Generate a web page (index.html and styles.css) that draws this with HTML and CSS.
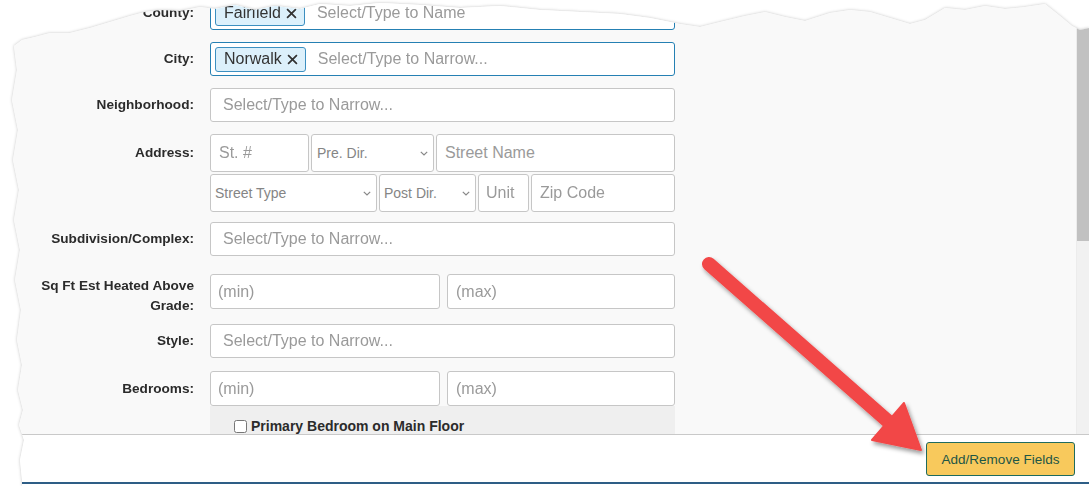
FILE: index.html
```html
<!DOCTYPE html>
<html>
<head>
<meta charset="utf-8">
<link rel="stylesheet" href="styles.css">
</head>
<body>
<div class="sheet">
  <div class="edge">
    <div class="torn">
      <div class="viewport">
        <div class="scroll-area">
          <form class="form">
            <div class="row r-county">
              <label class="label">County:</label>
              <div class="input focus tagbox">
                <span class="tag">Fairfield <svg class="x" viewBox="0 0 10 10"><path d="M1 1L9 9M9 1L1 9"/></svg></span>
                <span class="ph">Select/Type to Name</span>
              </div>
            </div>
            <div class="row r-city">
              <label class="label">City:</label>
              <div class="input focus tagbox">
                <span class="tag">Norwalk <svg class="x" viewBox="0 0 10 10"><path d="M1 1L9 9M9 1L1 9"/></svg></span>
                <span class="ph">Select/Type to Narrow...</span>
              </div>
            </div>
            <div class="row r-nb">
              <label class="label">Neighborhood:</label>
              <input class="input pad12" placeholder="Select/Type to Narrow...">
            </div>
            <div class="row r-addr">
              <label class="label">Address:</label>
              <div class="addr">
                <div class="addr-line one">
                  <input class="input tall pad8" placeholder="St. #">
                  <div class="select tall"><span>Pre. Dir.</span><svg class="chev" viewBox="0 0 8 5"><path d="M0.8 0.8L4 4L7.2 0.8"/></svg></div>
                  <input class="input tall pad8" placeholder="Street Name">
                </div>
                <div class="addr-line two">
                  <div class="select tall"><span>Street Type</span><svg class="chev" viewBox="0 0 8 5"><path d="M0.8 0.8L4 4L7.2 0.8"/></svg></div>
                  <div class="select tall"><span>Post Dir.</span><svg class="chev" viewBox="0 0 8 5"><path d="M0.8 0.8L4 4L7.2 0.8"/></svg></div>
                  <input class="input tall pad7" placeholder="Unit">
                  <input class="input tall pad8" placeholder="Zip Code">
                </div>
              </div>
            </div>
            <div class="row r-sub">
              <label class="label">Subdivision/Complex:</label>
              <input class="input pad12" placeholder="Select/Type to Narrow...">
            </div>
            <div class="row r-sqft">
              <label class="label two-line">Sq Ft Est Heated Above Grade:</label>
              <div class="range">
                <input class="input mid pad7" placeholder="(min)">
                <input class="input mid pad8" placeholder="(max)">
              </div>
            </div>
            <div class="row r-style">
              <label class="label">Style:</label>
              <input class="input pad12" placeholder="Select/Type to Narrow...">
            </div>
            <div class="row r-bed">
              <label class="label">Bedrooms:</label>
              <div class="range">
                <input class="input mid pad7" placeholder="(min)">
                <input class="input mid pad8" placeholder="(max)">
              </div>
            </div>
            <div class="row r-panel">
              <span></span>
              <div class="panel">
                <label class="check"><input type="checkbox" class="cb">Primary Bedroom on Main Floor</label>
              </div>
            </div>
          </form>
        </div>
        <div class="scrollbar"><div class="thumb"></div></div>
      </div>
      <div class="footer">
        <button type="button" class="btn">Add/Remove Fields</button>
      </div>
      <div class="bottom-rule"></div>
    </div>
  </div>
  <svg class="arrow" width="1089" height="486" viewBox="0 0 1089 486">
    <defs>
      <filter id="sh" x="-20%" y="-20%" width="140%" height="140%">
        <feDropShadow dx="2" dy="3" stdDeviation="2" flood-color="#000" flood-opacity="0.4"/>
      </filter>
    </defs>
    <g filter="url(#sh)" fill="#f24646" stroke="#f24646">
      <line x1="709" y1="264" x2="890" y2="423" stroke-width="14" stroke-linecap="round"/>
      <polygon points="921,450 904,403 872,440" stroke-width="2" stroke-linejoin="round"/>
    </g>
  </svg>
</div>
</body>
</html>
```

FILE: styles.css
```css
* { box-sizing: border-box; }

html, body {
  margin: 0;
  padding: 0;
  background: #ffffff;
}

body {
  font-family: "Liberation Sans", Arial, sans-serif;
  color: #333333;
}

.sheet {
  position: relative;
  width: 1089px;
  height: 486px;
  overflow: hidden;
}

.edge {
  filter: drop-shadow(0 0 1.5px rgba(0, 0, 0, 0.22));
}

.torn {
  height: 486px;
  background: #ffffff;
  display: flex;
  flex-direction: column;
  clip-path: polygon(
    14px 46px, 22px 40px, 35px 37px, 50px 33px, 70px 33px, 90px 28px, 110px 22px,
    130px 16px, 145px 12px, 160px 10px, 180px 11px, 200px 7px, 215px 9px, 235px 5px,
    255px 10px, 275px 6px, 300px 9px, 320px 4px, 350px 6px, 380px 3px, 420px 5px,
    460px 8px, 500px 6px, 540px 10px, 580px 12px, 620px 14px, 650px 18px, 680px 24px,
    700px 27px, 720px 22px, 745px 16px, 765px 12px, 785px 17px, 805px 21px, 830px 13px,
    850px 10px, 870px 12px, 890px 18px, 910px 24px, 925px 20px, 945px 8px, 965px 10px,
    985px 6px, 1005px 9px, 1025px 7px, 1045px 4px, 1060px 16px, 1072px 26px, 1080px 30px,
    1089px 28px, 1089px 486px, 22px 486px, 22px 480px, 20px 460px, 24px 440px,
    19px 425px, 23px 410px, 18px 390px, 22px 365px, 17px 340px, 21px 310px, 15px 280px,
    20px 250px, 14px 220px, 19px 190px, 13px 160px, 18px 130px, 12px 100px, 17px 70px
  );
}

/* ---------- scrolling viewport ---------- */
.viewport {
  height: 435px;
  display: flex;
  border-bottom: 1px solid #c9c9c9;
  flex: none;
}

.scroll-area {
  flex: 1;
  background: #f9f9f9;
  overflow: hidden;
}

.scrollbar {
  width: 13px;
  background: #f1f1f1;
  border-left: 1px solid #ececec;
}

.thumb {
  height: 241px;
  background: #c1c1c1;
}

/* ---------- form ---------- */
.form {
  display: flex;
  flex-direction: column;
}

.row {
  display: grid;
  grid-template-columns: 194px 465px;
  column-gap: 16px;
  align-items: center;
}

.label {
  text-align: right;
  font-weight: bold;
  font-size: 13.6px;
  color: #2b2b2b;
  padding-left: 32px;
  line-height: 20px;
}

.r-county { margin-top: -4px; }
.r-city   { margin-top: 12px; }
.r-nb     { margin-top: 12px; }
.r-addr   { margin-top: 12px; align-items: start; }
.r-addr .label { line-height: 38px; }
.r-sub    { margin-top: 10px; }
.r-sqft   { margin-top: 18px; align-items: start; }
.r-sqft .label { padding-top: 2px; }
.r-style  { margin-top: 8px; }
.r-bed    { margin-top: 13px; }
.r-panel  { margin-top: 0; }

.input {
  display: block;
  width: 100%;
  height: 34px;
  margin: 0;
  border: 1px solid #c6c6c6;
  border-radius: 3px;
  background: #ffffff;
  font-family: "Liberation Sans", Arial, sans-serif;
  font-size: 16px;
  color: #333333;
  outline: none;
}

.input::placeholder { color: #9a9a9a; opacity: 1; }

.input.tall { height: 38px; }
.input.mid { height: 35px; }
.pad12 { padding: 0 12px; }
.pad8 { padding: 0 8px; }
.pad7 { padding: 0 7px; }

.input.focus { border-color: #2580b3; }

.tagbox {
  display: flex;
  align-items: center;
  padding: 0 4px;
  gap: 12px;
}

.tag {
  display: inline-flex;
  align-items: center;
  height: 25px;
  padding: 0 7px 0 8px;
  gap: 5px;
  background: #dcf0fb;
  border: 1px solid #3c8fc0;
  border-radius: 3px;
  font-size: 16px;
  color: #333333;
}

.x {
  width: 11px;
  height: 11px;
  stroke: #333333;
  stroke-width: 1.6;
  fill: none;
}

.ph {
  font-size: 16px;
  color: #9a9a9a;
}

/* address */
.addr {
  display: flex;
  flex-direction: column;
  gap: 2px;
}

.addr-line {
  display: grid;
  column-gap: 2px;
}

.addr-line.one { grid-template-columns: 99px 123px 239px; }
.addr-line.two { grid-template-columns: 167px 97px 51px 144px; }

.select {
  display: flex;
  align-items: center;
  justify-content: space-between;
  height: 38px;
  padding: 0 5px 0 4px;
  border: 1px solid #c6c6c6;
  border-radius: 3px;
  background: #ffffff;
  font-size: 14px;
  color: #858585;
}

.addr-line.one .select { padding-left: 5px; }

.chev {
  width: 8px;
  height: 5px;
  fill: none;
  stroke: #888888;
  stroke-width: 1.2;
}

.range {
  display: grid;
  grid-template-columns: 230px 228px;
  column-gap: 7px;
}

/* bedroom panel */
.panel {
  height: 40px;
  background: #efefef;
  padding: 12px 0 0 24px;
}

.check {
  display: flex;
  align-items: center;
  font-weight: bold;
  font-size: 14px;
  color: #2b2b2b;
}

.cb {
  width: 13px;
  height: 13px;
  margin: 0 4px 0 0;
}

/* ---------- footer ---------- */
.footer {
  height: 47px;
  display: flex;
  justify-content: flex-end;
  align-items: flex-start;
  padding: 7px 14px 0 0;
  background: #ffffff;
  flex: none;
}

.btn {
  height: 34px;
  width: 149px;
  padding: 0;
  background: #f8c95c;
  border: 1px solid #1f6b5e;
  border-radius: 3px;
  font-family: "Liberation Sans", Arial, sans-serif;
  font-size: 13.5px;
  color: #1d5646;
}

.bottom-rule {
  height: 2px;
  background: #2e5e86;
  flex: none;
}

/* ---------- annotation arrow ---------- */
.arrow {
  position: absolute;
  left: 0;
  top: 0;
  pointer-events: none;
}
```
